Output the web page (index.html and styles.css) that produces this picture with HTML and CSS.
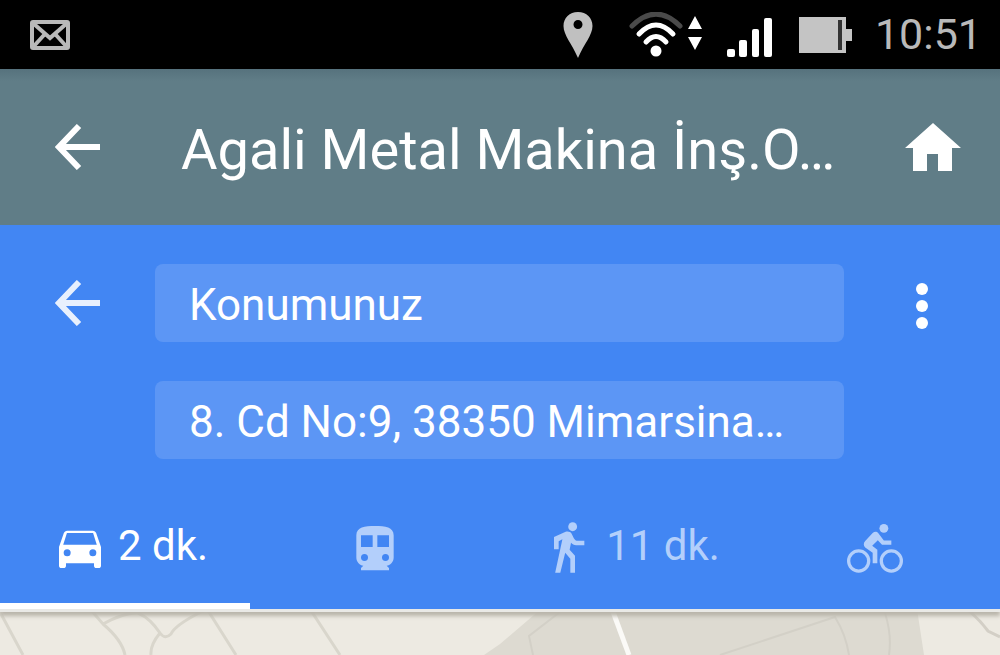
FILE: index.html
```
<!DOCTYPE html>
<html lang="tr">
  <head>
    <meta charset="UTF-8" />
    <meta name="viewport" content="width=device-width, initial-scale=1.0" />
    <title>Yol tarifi</title>
    <link rel="stylesheet" href="styles.css">
  </head>
  <body>
    <div class="status">
      <svg class="mail" width="40" height="30" viewBox="0 0 40 30">
        <rect x="2" y="2" width="36" height="26" rx="1" />
        <path d="M4 4 L20 18 L36 4 M4 26 L14 15 M36 26 L26 15" />
      </svg>
      <div class="status-icons">
        <svg class="pin" width="30" height="46" viewBox="0 0 30 46">
          <path fill-rule="evenodd" d="M15 0C6.500 0 .5 6 .5 14c0 9 8.500 18 14.500 32 6-14 14.500-23 14.500-32C29.500 6 23.500 0 15 0zM15 8a4.500 4.500 0 1 1 0 9a4.500 4.500 0 1 1 0-9z" />
        </svg>
        <svg class="wifi" width="74" height="46" viewBox="0 0 74 46">
          <g fill="none" stroke="#fff" stroke-width="5" stroke-linecap="round">
            <path stroke="#4a4a4a" d="M3 14Q27 -10 51 14" />
            <path d="M10 22Q27 4 44 22" />
            <path d="M17 30Q27 19 37 30" />
          </g>
          <circle cx="27" cy="39" r="5.500" fill="#fff" />
          <path fill="#fff" d="M59 17L66 4L73 17zM59 25L66 38L73 25z" />
        </svg>
        <svg class="signal" width="46" height="40" viewBox="0 0 46 40">
          <rect x="0" y="31" width="8" height="8" rx="2" />
          <rect x="12" y="22" width="8" height="17" rx="2" />
          <rect x="25" y="11" width="7" height="28" rx="2" />
          <rect x="37" y="0" width="8" height="39" rx="2" />
        </svg>
        <svg class="battery" width="54" height="36" viewBox="0 0 54 36">
          <path fill="#c4c4c4" d="M0 0h47v12h6v12h-6v12H0z" />
          <rect x="39" y="3" width="4" height="30" fill="#333" />
        </svg>
        <span class="clock">10:51</span>
      </div>
    </div>

    <header class="titlebar">
      <button class="icon-button" aria-label="Geri">
        <svg width="46" height="46" viewBox="0 0 46 46">
          <path class="arrow" d="M45 23H4M24 2L4 23L24 44" />
        </svg>
      </button>
      <h1>Agali Metal Makina İnş.O…</h1>
      <button class="icon-button" aria-label="Ana sayfa">
        <svg width="56" height="48" viewBox="0 0 56 48">
          <path fill="#fff" d="M28 0L56 25H47V48H33V31H22V48H8V25H0z" />
        </svg>
      </button>
    </header>

    <main class="directions">
      <form class="route">
        <button type="button" class="icon-button back" aria-label="Geri">
          <svg width="46" height="46" viewBox="0 0 46 46">
            <path class="arrow" d="M45 23H4M24 2L4 23L24 44" />
          </svg>
        </button>
        <div class="fields">
          <input type="text" aria-label="Başlangıç" value="Konumunuz" />
          <input type="text" aria-label="Hedef" value="8. Cd No:9, 38350 Mimarsina…" />
        </div>
        <button type="button" class="icon-button more" aria-label="Menü">
          <svg width="12" height="46" viewBox="0 0 12 46" fill="#fff">
            <circle cx="6" cy="6" r="6" />
            <circle cx="6" cy="23" r="6" />
            <circle cx="6" cy="40" r="6" />
          </svg>
        </button>
      </form>
      <nav class="modes">
        <button class="mode timed active">
          <svg viewBox="0 0 24 24">
            <path fill-rule="evenodd" d="M18.920 6.010C18.720 5.420 18.160 5 17.500 5h-11c-.66 0-1.210.42-1.420 1.010L3 12v8c0 .55.45 1 1 1h1c.55 0 1-.45 1-1v-1h12v1c0 .55.45 1 1 1h1c.55 0 1-.45 1-1v-8l-2.080-5.990zM6.500 16a1.500 1.500 0 1 1 0-3 1.500 1.500 0 0 1 0 3zm11 0a1.500 1.500 0 1 1 0-3 1.500 1.500 0 0 1 0 3zM4.800 11l1.600-5h11.200l1.600 5z" />
          </svg>
          <span>2 dk.</span>
        </button>
        <button class="mode" aria-label="Toplu taşıma">
          <svg viewBox="0 -1 24 24">
            <path fill-rule="evenodd" d="M12 2C7.600 2 4 2.500 4 6v9.500C4 17.430 5.570 19 7 19L6 20v1h12v-1l-1-1c1.430 0 3-1.570 3-3.500V6c0-3.500-3.580-4-8-4zM7.500 17a1.500 1.500 0 1 1 0-3 1.500 1.500 0 0 1 0 3zm9 0a1.500 1.500 0 1 1 0-3 1.500 1.500 0 0 1 0 3zM11 11H6V6h5zM18 11h-5V6h5z" />
          </svg>
        </button>
        <button class="mode timed">
          <svg viewBox="0 0 24 24">
            <circle cx="14" cy="3.300" r="1.900" />
            <path d="M9.600 8.700L8 9.500V13H6V7.700L11 5.500c1-.3 2 0 2.500.7l1 2c.4.7.9 1.100 1.800 1.100H19v1.900h-3.500c-1 0-1.600-.3-2.200-1l-.6 3 2.300 2.500V23h-2v-6l-2.200-2.500L8.700 23H6.500z" />
          </svg>
          <span>11 dk.</span>
        </button>
        <button class="mode" aria-label="Bisiklet">
          <svg viewBox="0 -1 24 24">
            <circle cx="15.800" cy="3" r="1.900" />
            <circle class="wheel" cx="5" cy="17" r="4.300" />
            <circle class="wheel" cx="19" cy="17" r="4.300" />
            <path d="M10.800 10.500L13.200 8.100L15 10H19V8.200H15.800L13.600 5.300C12.900 4.200 11.800 4.200 11 5L7.800 8.400c-.8.800-.8 2 0 2.800L11 13.500V18H13V12.200z" />
          </svg>
        </button>
      </nav>
    </main>

    <div class="map">
      <svg width="100%" height="100%" viewBox="0 612 1000 43" preserveAspectRatio="xMidYMin slice">
        <path fill="#dddad1" d="M541 609L500 644L484 655H924L917 609z" />
        <path fill="none" stroke="#d9d6cc" stroke-width="3" d="M0 612L23 655M90 609L103 624Q122 640 125 655M103 624Q125 612 138 613Q150 618 160 633Q165 640 171 634Q175 625 203 611M160 633Q150 645 151 655M207 609L236 655M310 609L340 655" />
        <path fill="none" stroke="#d3d0c7" stroke-width="2" d="M560 612L529 636L533 655M720 655L835 617Q846 635 849 655M885 613Q892 635 889 655" />
        <path fill="none" stroke="#d3cfc6" stroke-width="3" d="M967 609Q980 620 988 631L1000 637" />
        <path fill="none" stroke="#fbfaf7" stroke-width="5" d="M612 609L629 655" />
      </svg>
    </div>
  </body>
</html>
```

FILE: styles.css
```
* {
  box-sizing: border-box;
}
body {
  margin: 0;
  min-height: 100vh;
  display: flex;
  flex-direction: column;
  background: #edeae2;
  color: white;
  font-family: Roboto, Arial, sans-serif;
}
button,
input {
  font: inherit;
  color: inherit;
  border: 0;
  background: none;
  padding: 0;
}
svg {
  display: block;
  flex: none;
}

/* status bar */
.status {
  height: 69px;
  padding: 0 18px 0 30px;
  display: flex;
  align-items: center;
  justify-content: space-between;
  background: black;
  color: #b9b9b9;
}
.mail {
  fill: none;
  stroke: #b9b9b9;
  stroke-width: 4;
}
.status-icons {
  display: flex;
  align-items: center;
}
.pin {
  fill: #c0c0c0;
  margin-right: 36px;
}
.wifi {
  margin-right: 24px;
}
.signal {
  fill: white;
  margin-right: 26px;
  margin-top: 6px;
}
.battery {
  margin-right: 22px;
}
.clock {
  font-size: 43px;
  line-height: 69px;
}

.titlebar {
  display: grid;
  grid-template-columns: 156px 1fr 134px;
  height: 156px;
  background: linear-gradient(#56727d, #607d87 12px);
}
.titlebar h1 {
  margin: 0;
  padding-left: 25px;
  font-size: 56px;
  font-weight: 400;
  line-height: 162px;
  white-space: nowrap;
}
.icon-button {
  display: flex;
  align-items: center;
  justify-content: center;
}
.titlebar .icon-button {
  height: 156px;
}
.arrow {
  fill: none;
  stroke: white;
  stroke-width: 6;
}

/* directions panel */
.directions {
  position: relative;
  background: #4286f3;
  border-bottom: 3px solid #e9e9e6;
  box-shadow: 0 4px 4px #b9b5ab;
}
.route {
  display: grid;
  grid-template-columns: 155px 1fr 156px;
  align-items: start;
  padding-top: 39px;
}
.back {
  height: 78px;
  opacity: 0.88;
}
.more {
  height: 84px;
}
.fields {
  display: grid;
  gap: 39px;
}
.fields input {
  width: 100%;
  height: 78px;
  padding: 4px 34px 0;
  border-radius: 8px;
  background: #5c96f5;
  font-size: 44px;
}

.modes {
  display: grid;
  grid-template-columns: repeat(4, 1fr);
  margin-top: 32px;
}
.mode {
  height: 118px;
  display: flex;
  align-items: center;
  justify-content: center;
  gap: 10px;
  border-bottom: 6px solid transparent;
  font-size: 42px;
  color: #b3cffb;
}
.mode svg {
  width: 56px;
  height: 56px;
  fill: currentColor;
}
.mode .wheel {
  fill: none;
  stroke: currentColor;
  stroke-width: 1.4;
}
.timed {
  padding-left: 10px;
}
.timed span {
  margin-bottom: 4px;
}
.active {
  color: white;
  border-bottom-color: white;
}

.map {
  flex: 1;
  min-height: 43px;
  overflow: hidden;
}
```
